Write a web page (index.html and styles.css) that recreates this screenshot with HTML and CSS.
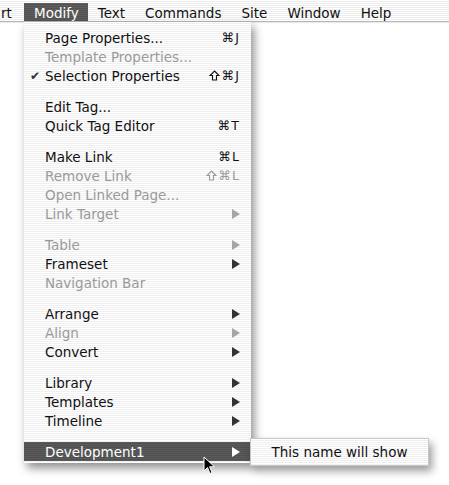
FILE: index.html
```html
<!DOCTYPE html>
<html lang="en">
<head>
    <meta charset="UTF-8">
    <title>Modify Menu</title>
    <link rel="stylesheet" href="styles.css">
</head>
<body>
    <div class="menubar">
        <span class="bar-item cut">rt</span>
        <span class="bar-item active">Modify</span>
        <span class="bar-item">Text</span>
        <span class="bar-item">Commands</span>
        <span class="bar-item">Site</span>
        <span class="bar-item">Window</span>
        <span class="bar-item">Help</span>
    </div>

    <div class="menu">
        <div class="item"><span class="label">Page Properties...</span><span class="key">⌘J</span></div>
        <div class="item off"><span class="label">Template Properties...</span></div>
        <div class="item"><span class="check">✔</span><span class="label">Selection Properties</span><span class="key"><svg class="shift" viewBox="0 0 11 11"><path d="M5.5 1 L10 5.5 L7.5 5.5 L7.5 10 L3.5 10 L3.5 5.5 L1 5.5 Z"/></svg>⌘J</span></div>
        <div class="sep"></div>
        <div class="item"><span class="label">Edit Tag...</span></div>
        <div class="item"><span class="label">Quick Tag Editor</span><span class="key">⌘T</span></div>
        <div class="sep"></div>
        <div class="item"><span class="label">Make Link</span><span class="key">⌘L</span></div>
        <div class="item off"><span class="label">Remove Link</span><span class="key"><svg class="shift" viewBox="0 0 11 11"><path d="M5.5 1 L10 5.5 L7.5 5.5 L7.5 10 L3.5 10 L3.5 5.5 L1 5.5 Z"/></svg>⌘L</span></div>
        <div class="item off"><span class="label">Open Linked Page...</span></div>
        <div class="item off"><span class="label">Link Target</span><span class="arrow"></span></div>
        <div class="sep"></div>
        <div class="item off"><span class="label">Table</span><span class="arrow"></span></div>
        <div class="item"><span class="label">Frameset</span><span class="arrow"></span></div>
        <div class="item off"><span class="label">Navigation Bar</span></div>
        <div class="sep"></div>
        <div class="item"><span class="label">Arrange</span><span class="arrow"></span></div>
        <div class="item off"><span class="label">Align</span><span class="arrow"></span></div>
        <div class="item"><span class="label">Convert</span><span class="arrow"></span></div>
        <div class="sep"></div>
        <div class="item"><span class="label">Library</span><span class="arrow"></span></div>
        <div class="item"><span class="label">Templates</span><span class="arrow"></span></div>
        <div class="item"><span class="label">Timeline</span><span class="arrow"></span></div>
        <div class="sep"></div>
        <div class="item selected"><span class="label">Development1</span><span class="arrow"></span></div>
    </div>

    <div class="submenu">This name will show</div>

    <!-- mouse pointer -->
    <svg class="cursor" width="13" height="19" viewBox="0 0 13 19">
        <path d="M1 1 L1 15 L4.5 11.5 L7 17.5 L9 16.6 L6.6 10.8 L11.5 10.8 Z" fill="#000" stroke="#fff" stroke-width="1"/>
    </svg>
</body>
</html>
```

FILE: styles.css
```css
body {
    margin: 0;
    padding: 0;
    background-color: #fff;
    font-family: "DejaVu Sans", Verdana, sans-serif;
    font-size: 13.5px;
    color: #111;
    width: 449px;
    height: 485px;
    overflow: hidden;
    position: relative;
}

.menubar {
    display: flex;
    height: 22px;
    box-sizing: border-box;
    background: repeating-linear-gradient(#fff 0 1px, #ededed 1px 2px);
    border-bottom: 1px solid #b5b5b5;
    box-shadow: 0 1px 1px rgba(0, 0, 0, 0.08);
}

.bar-item {
    padding: 3px 10px 0;
    height: 18px;
    margin-top: 3px;
    line-height: 15px;
    box-sizing: border-box;
}

.bar-item.cut {
    padding: 3px 0 0 1px;
    width: 24px;
}

.bar-item.active {
    background: repeating-linear-gradient(#5e5e5e 0 1px, #525252 1px 2px);
    color: #fff;
    padding: 3px 9px 0 10px;
}

.menu {
    position: absolute;
    top: 22px;
    left: 24px;
    width: 227px;
    padding: 6px 0 2px;
    background: repeating-linear-gradient(#fff 0 1px, #efefef 1px 2px);
    box-shadow: 3px 5px 9px rgba(0, 0, 0, 0.45);
}

.item {
    display: flex;
    align-items: center;
    height: 19px;
    padding: 0 11px 0 21px;
    position: relative;
}

.item .label {
    flex: 1;
}

.item .key {
    display: flex;
    align-items: center;
    font-size: 12.5px;
    letter-spacing: 1px;
}

.shift {
    width: 11px;
    height: 11px;
    margin-right: 2px;
    fill: none;
    stroke: #111;
    stroke-width: 1.1;
}

.item.off .shift {
    stroke: #9a9a9a;
}

.item .check {
    position: absolute;
    left: 6px;
    font-size: 12px;
    color: #333;
}

.item .arrow {
    width: 0;
    height: 0;
    border-left: 8px solid #333;
    border-top: 5px solid transparent;
    border-bottom: 5px solid transparent;
}

.item.off {
    color: #9a9a9a;
}

.item.off .arrow {
    border-left-color: #a5a5a5;
}

.item.selected {
    background: repeating-linear-gradient(#5c5c5c 0 1px, #4f4f4f 1px 2px);
    color: #fff;
}

.item.selected .arrow {
    border-left-color: #fff;
}

.sep {
    height: 12px;
}

.submenu {
    position: absolute;
    top: 438px;
    left: 250px;
    width: 179px;
    height: 28px;
    box-sizing: border-box;
    border: 1px solid #c8c8c8;
    background: repeating-linear-gradient(#fff 0 1px, #efefef 1px 2px);
    box-shadow: 3px 5px 9px rgba(0, 0, 0, 0.4);
    text-align: center;
    line-height: 26px;
}

.cursor {
    position: absolute;
    left: 203px;
    top: 456px;
}
```
